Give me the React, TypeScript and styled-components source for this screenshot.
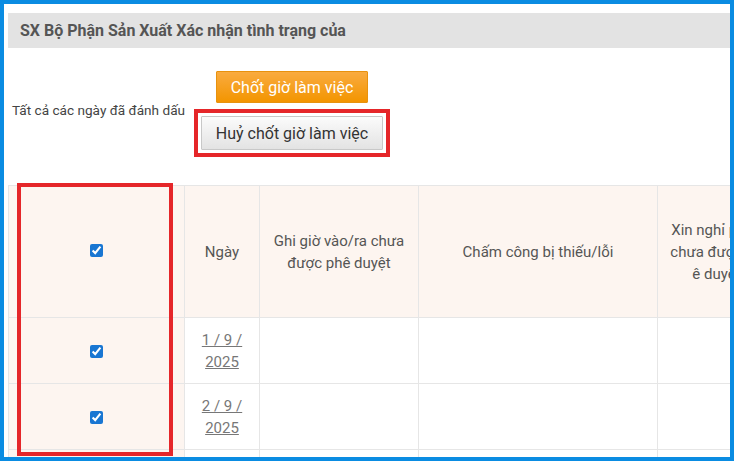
import React from 'react';
import styled, { createGlobalStyle } from 'styled-components';

const GlobalStyle = createGlobalStyle`
    html, body {
        margin: 0;
        padding: 0;
        background: #ffffff;
        font-family: Roboto, "Liberation Sans", Arial, sans-serif;
    }
`;

const Frame = styled.div`
    width: 734px;
    height: 461px;
    box-sizing: border-box;
    border: 4px solid #0a8ce2;
    background: #ffffff;
    padding: 9px 0 0 4px;
    overflow: hidden;
`;

const TitleBar = styled.div`
    height: 35px;
    display: flex;
    align-items: center;
    padding-left: 12px;
    background: #e3e3e3;
    color: #555;
    font-size: 16px;
    font-weight: 700;
    white-space: nowrap;
`;

const ActionRow = styled.div`
    display: flex;
    align-items: center;
    margin-top: 23px;
`;

const ActionLabel = styled.div`
    width: 180px;
    padding: 0 0 8px 4px;
    font-size: 13.6px;
    color: #444;
    white-space: nowrap;
`;

const ButtonStack = styled.div`
    width: 200px;
    display: flex;
    flex-direction: column;
    align-items: center;
    gap: 6px;
`;

const Button = styled.button<{ $variant: 'primary' | 'default' }>`
    font-family: Roboto, "Liberation Sans", Arial, sans-serif;
    font-size: 16px;
    padding: 0 14px;
    cursor: pointer;
    border-radius: 1px;
    white-space: nowrap;
    height: ${(p) => (p.$variant === 'primary' ? '32px' : '34px')};
    color: ${(p) => (p.$variant === 'primary' ? '#ffffff' : '#333333')};
    border: 1px solid ${(p) => (p.$variant === 'primary' ? '#e8920e' : '#c8c8c8')};
    background: ${(p) =>
        p.$variant === 'primary'
            ? 'linear-gradient(#f9ab40, #f39500)'
            : 'linear-gradient(#fbfbfb, #e3e3e3)'};
`;

/* khung đỏ đánh dấu trong ảnh chụp */
const Highlight = styled.div`
    border: 4px solid #e52629;
    padding: 3px;
    display: flex;
`;

const TableWrap = styled.div`
    position: relative;
    margin-top: 28px;
    width: max-content;
`;

const Table = styled.table`
    border-collapse: collapse;
    table-layout: fixed;
    font-size: 15px;
    color: #555;
`;

const HeadCell = styled.th<{ $w: number }>`
    width: ${(p) => p.$w}px;
    height: 132px;
    box-sizing: border-box;
    padding: 0 8px;
    border: 1px solid #e6e6e6;
    background: #fdf5f0;
    font-weight: 400;
    line-height: 22px;
    text-align: center;
    vertical-align: middle;
    white-space: nowrap;
`;

const Cell = styled.td<{ $check?: boolean }>`
    height: 66px;
    box-sizing: border-box;
    padding: 0 8px;
    border: 1px solid #e6e6e6;
    background: ${(p) => (p.$check ? '#fdf5f0' : '#ffffff')};
    text-align: center;
    vertical-align: middle;
    line-height: 22px;
`;

const Check = styled.input.attrs({ type: 'checkbox', readOnly: true })<{ $head?: boolean }>`
    display: block;
    width: 13px;
    height: 13px;
    margin: ${(p) => (p.$head ? '-2px' : '1px')} auto 0;
    accent-color: #1976d2;
`;

const DateLink = styled.a`
    color: #777;
    text-decoration: underline;
    white-space: nowrap;
`;

const Marker = styled.div`
    position: absolute;
    left: 9px;
    top: -2px;
    width: 156px;
    height: 273px;
    box-sizing: border-box;
    border: 4px solid #e52629;
    pointer-events: none;
`;

const rows = [
    { day: '1 / 9 /', year: '2025' },
    { day: '2 / 9 /', year: '2025' },
    { day: '3 / 9 /', year: '2025' },
];

const App: React.FC = () => {
    return (
        <>
            <GlobalStyle />
            <Frame>
                <TitleBar>SX Bộ Phận Sản Xuất Xác nhận tình trạng của</TitleBar>
                <ActionRow>
                    <ActionLabel>Tất cả các ngày đã đánh dấu</ActionLabel>
                    <ButtonStack>
                        <Button $variant="primary">Chốt giờ làm việc</Button>
                        <Highlight>
                            <Button $variant="default">Huỷ chốt giờ làm việc</Button>
                        </Highlight>
                    </ButtonStack>
                </ActionRow>
                <TableWrap>
                    <Table>
                        <thead>
                            <tr>
                                <HeadCell $w={176}>
                                    <Check $head checked />
                                </HeadCell>
                                <HeadCell $w={75}>Ngày</HeadCell>
                                <HeadCell $w={159}>
                                    Ghi giờ vào/ra chưa
                                    <br />
                                    được phê duyệt
                                </HeadCell>
                                <HeadCell $w={239}>Chấm công bị thiếu/lỗi</HeadCell>
                                <HeadCell $w={118}>
                                    Xin nghỉ phép
                                    <br />
                                    chưa được ph
                                    <br />
                                    ê duyệt
                                </HeadCell>
                                <HeadCell $w={140}>Ghi chú</HeadCell>
                            </tr>
                        </thead>
                        <tbody>
                            {rows.map((r) => (
                                <tr key={r.day}>
                                    <Cell $check>
                                        <Check checked />
                                    </Cell>
                                    <Cell>
                                        <DateLink>
                                            {r.day}
                                            <br />
                                            {r.year}
                                        </DateLink>
                                    </Cell>
                                    <Cell />
                                    <Cell />
                                    <Cell />
                                    <Cell />
                                </tr>
                            ))}
                        </tbody>
                    </Table>
                    <Marker />
                </TableWrap>
            </Frame>
        </>
    );
};

export default App;
